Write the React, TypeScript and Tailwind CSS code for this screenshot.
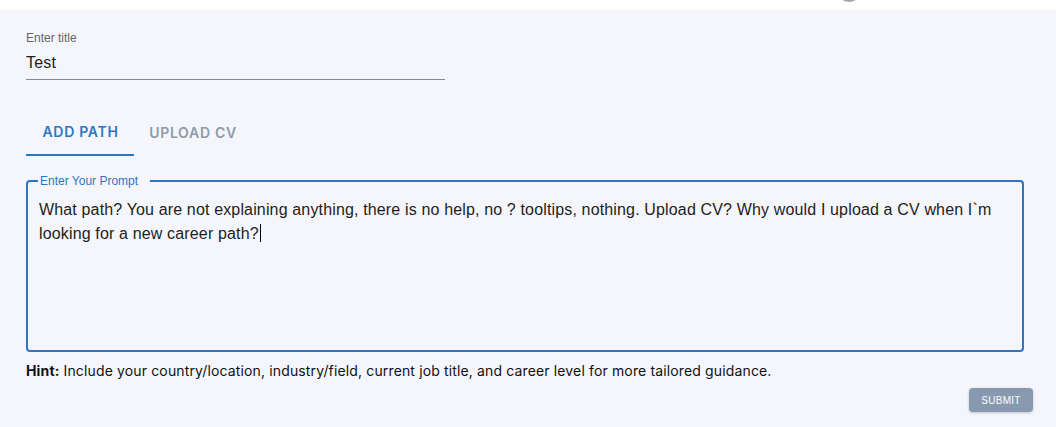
export default function App() {
    return (
        <div className="relative min-h-[427px] w-[1056px] overflow-hidden bg-[#f5f6fb] font-['Liberation_Sans',Arial,sans-serif]">
            <div className="relative h-[10px] bg-white">
                <div className="absolute left-[837px] top-[-22px] h-[24px] w-[24px] rounded-full border-b-[2px] border-[#a9a9a9] bg-white" />
            </div>
            <main className="px-[26px]">
                <div className="w-[419px] pt-[21px]">
                    <label className="block text-[12px] leading-[14px] text-[#666]">Enter title</label>
                    <div className="mt-[8px] border-b border-[#8a8a8a] pb-[7px] text-[16px] leading-[19px] tracking-[0.2px] text-[#1d1d1d]">
                        Test
                    </div>
                </div>
                <div className="mt-[32px] flex font-['Inter',sans-serif] text-[14px] font-semibold tracking-[0.05em]">
                    <div className="flex h-[44px] w-[108px] items-center justify-center border-b-2 border-[#2f75c2] pb-[4px] pl-[1px] text-[#2f75c2]">
                        ADD PATH
                    </div>
                    <div className="flex h-[44px] w-[118px] items-center justify-center pb-[4px] text-[#8e9aa8]">
                        UPLOAD CV
                    </div>
                </div>
                <fieldset className="mt-[18px] h-[178px] w-[998px] rounded-[4px] border-2 border-[#2f75c2] px-[11px] pt-0">
                    <legend className="ml-[-1px] pl-[2px] pr-[12px] text-[12px] leading-[14px] text-[#2f75c2]">Enter Your Prompt</legend>
                    <p className="mt-[10px] text-[16px] leading-[23px] tracking-[0.15px] text-[#1d1d1d]">
                        What path? You are not explaining anything, there is no help, no ? tooltips, nothing. Upload CV? Why would I upload a CV when I`m looking for a new career path?
                        <span className="ml-[1px] inline-block h-[18px] w-px translate-y-[3px] bg-black" />
                    </p>
                </fieldset>
                <p className="mt-[10px] font-['Inter',sans-serif] text-[14px] leading-[17px] tracking-[0.14px] text-[#111]">
                    <span className="font-bold">Hint:</span> Include your country/location, industry/field, current job title, and career level for more tailored guidance.
                </p>
                <div className="mt-[9px] flex justify-end">
                    <button className="mr-[-3px] h-[24px] w-[64px] rounded-[4px] bg-[#8799ae] text-[10px] font-medium tracking-[0.03em] text-white shadow-[0_1px_3px_rgba(0,0,0,0.2)]">
                        SUBMIT
                    </button>
                </div>
            </main>
        </div>
    );
}
